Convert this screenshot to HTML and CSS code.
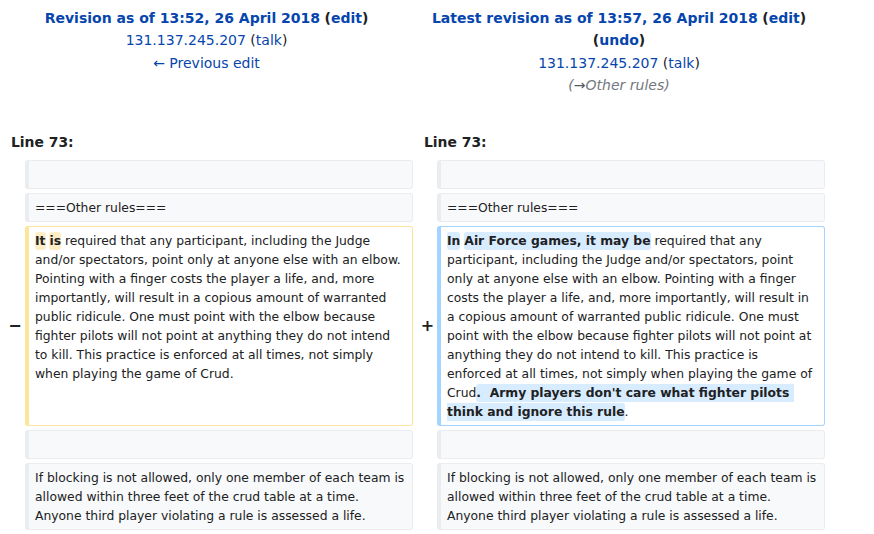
FILE: index.html
```html
<!DOCTYPE html>
<html lang="en">
<head>
<meta charset="utf-8">
<title>Difference between revisions</title>
<link rel="stylesheet" href="styles.css">
</head>
<body>
<div class="diff">
  <div class="diff-head">
    <div class="rev-title">
      <div class="rev-line"><a class="strong" href="#">Revision as of 13:52, 26 April 2018</a> <span class="strong">(<a href="#">edit</a>)</span></div>
      <div class="rev-line"><a href="#">131.137.245.207</a> (<a href="#">talk</a>)</div>
      <div class="rev-line"><a href="#">← Previous edit</a></div>
    </div>
    <div class="rev-title">
      <div class="rev-line"><a class="strong" href="#">Latest revision as of 13:57, 26 April 2018</a> <span class="strong">(<a href="#">edit</a>)</span></div>
      <div class="rev-line"><span class="strong">(<a href="#">undo</a>)</span></div>
      <div class="rev-line"><a href="#">131.137.245.207</a> (<a href="#">talk</a>)</div>
      <div class="rev-line"><span class="comment">(<span class="arrow">→</span>Other rules)</span></div>
    </div>
  </div>
  <div class="lineno-row">
    <div class="lineno">Line 73:</div>
    <div class="lineno">Line 73:</div>
  </div>
  <div class="diff-grid">
    <div class="marker"></div>
    <div class="cell context"><br></div>
    <div class="marker"></div>
    <div class="cell context"><br></div>

    <div class="marker"></div>
    <div class="cell context">===Other rules===</div>
    <div class="marker"></div>
    <div class="cell context">===Other rules===</div>

    <div class="marker">−</div>
    <div class="cell deleted"><del class="chg">It</del> <del class="chg">is</del> required that any participant, including the Judge and/or spectators, point only at anyone else with an elbow. Pointing with a finger costs the player a life, and, more importantly, will result in a copious amount of warranted public ridicule. One must point with the elbow because fighter pilots will not point at anything they do not intend to kill. This practice is enforced at all times, not simply when playing the game of Crud.</div>
    <div class="marker">+</div>
    <div class="cell added"><ins class="chg">In</ins> <ins class="chg">Air Force games, it may be</ins> required that any participant, including the Judge and/or spectators, point only at anyone else with an elbow. Pointing with a finger costs the player a life, and, more importantly, will result in a copious amount of warranted public ridicule. One must point with the elbow because fighter pilots will not point at anything they do not intend to kill. This practice is enforced at all times, not simply when playing the game of Crud<ins class="chg">.  Army players don't care what fighter pilots think and ignore this rule</ins>.</div>

    <div class="marker"></div>
    <div class="cell context"><br></div>
    <div class="marker"></div>
    <div class="cell context"><br></div>

    <div class="marker"></div>
    <div class="cell context">If blocking is not allowed, only one member of each team is allowed within three feet of the crud table at a time. Anyone third player violating a rule is assessed a life.</div>
    <div class="marker"></div>
    <div class="cell context">If blocking is not allowed, only one member of each team is allowed within three feet of the crud table at a time. Anyone third player violating a rule is assessed a life.</div>
  </div>
</div>
</body>
</html>
```
FILE: styles.css
```css
html, body {
  margin: 0;
  padding: 0;
  background: #fff;
}
body {
  font-family: "DejaVu Sans", sans-serif;
  color: #202122;
}
a {
  color: #0645ad;
  text-decoration: none;
}
.diff {
  width: 825px;
  padding-top: 7px;
}
.diff-head {
  display: grid;
  grid-template-columns: 413px 412px;
}
.rev-title {
  text-align: center;
  font-size: 14px;
  line-height: 22.4px;
}
.strong {
  font-weight: bold;
}
.comment {
  font-style: italic;
  color: #72777d;
}
.arrow {
  color: #54595d;
}
.lineno-row {
  display: grid;
  grid-template-columns: 413px 412px;
  margin-top: 36px;
}
.lineno {
  font-weight: bold;
  font-size: 13.9px;
  line-height: 19px;
  padding-left: 11px;
}
.diff-grid {
  display: grid;
  grid-template-columns: 25px 388px 24px 388px;
  row-gap: 4px;
  margin-top: 8px;
}
.marker {
  display: flex;
  align-items: center;
  justify-content: center;
  padding-left: 5px;
  font-weight: bold;
  font-size: 16px;
}
.cell {
  font-size: 12.35px;
  line-height: 19px;
  padding: 5px 6px 3px;
  border: 1px solid #eaecf0;
  border-left-width: 4px;
  border-radius: 3px;
  white-space: pre-wrap;
  word-wrap: break-word;
}
.context {
  background: #f8f9fa;
  color: #202122;
}
.deleted {
  border-color: #ffe49c;
  background: #fff;
}
.added {
  border-color: #a3d3ff;
  background: #fff;
  padding-right: 10px;
}
.chg {
  text-decoration: none;
  font-weight: bold;
  border-radius: 3px;
  padding: 2px 0;
}
del.chg {
  background: #feeec8;
}
ins.chg {
  background: #d8ecff;
}
```
